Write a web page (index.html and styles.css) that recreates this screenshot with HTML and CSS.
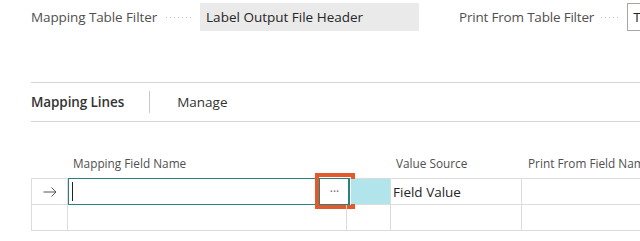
FILE: index.html
```html
<!DOCTYPE html>
<html>
<head>
<meta charset="utf-8">
<link rel="stylesheet" href="styles.css">
</head>
<body>
<div class="page">
  <div class="filters">
    <div class="field field-first">
      <span class="label">Mapping Table Filter</span>
      <span class="leader"></span>
      <span class="value value-filled">Label Output File Header</span>
    </div>
    <div class="field field-second">
      <span class="label">Print From Table Filter</span>
      <span class="leader leader-short"></span>
      <span class="value value-edit">Tr</span>
    </div>
  </div>

  <div class="tabs">
    <span class="tab-title">Mapping Lines</span>
    <span class="tab-sep"></span>
    <span class="tab-action">Manage</span>
  </div>

  <div class="grid">
    <div class="row head">
      <div class="cell c-mark"></div>
      <div class="cell c-name">Mapping Field Name</div>
      <div class="cell c-gap"></div>
      <div class="cell c-src">Value Source</div>
      <div class="cell c-print">Print From Field Name</div>
    </div>
    <div class="row body active">
      <div class="cell c-mark"><svg width="14" height="10" viewBox="0 0 14 10"><path d="M0.5 5H13M8.5 0.5L13 5L8.5 9.5" fill="none" stroke="#555" stroke-width="1"/></svg></div>
      <div class="cell c-name">
        <div class="edit">
          <span class="caret"></span>
          <span class="lookup">···<span class="highlight"></span></span>
        </div>
      </div>
      <div class="cell c-gap"><span class="tint"></span></div>
      <div class="cell c-src">Field Value</div>
      <div class="cell c-print"></div>
    </div>
    <div class="row body">
      <div class="cell c-mark"></div>
      <div class="cell c-name"></div>
      <div class="cell c-gap"></div>
      <div class="cell c-src"></div>
      <div class="cell c-print"></div>
    </div>
  </div>
</div>
</body>
</html>
```
FILE: styles.css
```css
html, body {
  margin: 0;
  padding: 0;
  background: #fff;
  overflow: hidden;
}
body {
  font-family: "Open Sans", "Noto Sans", sans-serif;
  color: #212121;
  width: 640px;
  height: 241px;
}
.page {
  padding-left: 31px;
  width: 640px;
  box-sizing: border-box;
  overflow: hidden;
}
.filters {
  display: flex;
  height: 34px;
  padding-top: 3px;
  box-sizing: border-box;
  white-space: nowrap;
}
.field {
  display: flex;
  align-items: center;
  height: 28px;
  flex-shrink: 0;
}
.field-second {
  margin-left: 40px;
}
.label {
  font-size: 13.5px;
  color: #505050;
  letter-spacing: -0.1px;
}
.field-second .label {
  letter-spacing: -0.2px;
}
.leader {
  width: 27px;
  height: 1px;
  margin: 0 7px 0 9px;
  background-image: repeating-linear-gradient(to right, #c4c4c4 0, #c4c4c4 1px, transparent 1px, transparent 4px);
}
.leader-short {
  width: 20px;
  margin: 0 6px 0 7px;
}
.value {
  font-size: 13.5px;
  height: 28px;
  line-height: 28px;
  box-sizing: border-box;
  flex-shrink: 0;
}
.value-filled {
  background: #eaeaea;
  width: 219px;
  padding-left: 6px;
  color: #262626;
}
.value-edit {
  border: 1px solid #a6a6a6;
  padding-left: 5px;
  line-height: 26px;
  width: 40px;
}
.tabs {
  margin-top: 48px;
  height: 38px;
  border-top: 1px solid #d4d4d4;
  border-bottom: 1px solid #d4d4d4;
  display: flex;
  align-items: center;
  font-size: 13.5px;
}
.tab-title {
  font-weight: 600;
  color: #333;
  letter-spacing: -0.1px;
}
.tab-sep {
  width: 1px;
  height: 22px;
  background: #c8c8c8;
  margin: 0 27px 0 25px;
}
.tab-action {
  color: #333;
}
.grid {
  margin-top: 28px;
  font-size: 13.5px;
}
.row {
  display: flex;
}
.row.head {
  height: 28px;
  font-size: 11.8px;
  color: #505050;
  align-items: center;
  padding-bottom: 3px;
  box-sizing: border-box;
}
.row.body {
  height: 26px;
  border-bottom: 1px solid #dcdcdc;
  box-sizing: border-box;
}
.row.active {
  border-top: 1px solid #dcdcdc;
  height: 27px;
}
.cell {
  box-sizing: border-box;
  display: flex;
  align-items: center;
  white-space: nowrap;
  flex-shrink: 0;
}
.body .cell {
  border-right: 1px solid #dcdcdc;
}
.body .c-mark {
  border-left: 1px solid #dcdcdc;
}
.c-mark {
  width: 37px;
  justify-content: center;
}
.c-name {
  width: 279px;
  padding-left: 5px;
  position: relative;
}
.body .c-name {
  padding-left: 0;
}
.c-gap {
  width: 44px;
  position: relative;
}
.c-src {
  width: 131px;
  padding-left: 5px;
}
.body .c-src {
  padding-left: 2px;
  color: #262626;
}
.c-print {
  width: 130px;
  padding-left: 6px;
}
.body .c-print {
  border-right: none;
}
.edit {
  position: absolute;
  left: 0;
  top: -1px;
  width: 281px;
  height: 27px;
  border: 1.5px solid #2b7f7f;
  box-sizing: border-box;
  background: #fff;
  display: flex;
  align-items: center;
}
.caret {
  width: 1px;
  height: 19px;
  background: #222;
  margin-left: 3px;
}
.lookup {
  margin-left: auto;
  width: 31px;
  height: 27px;
  margin-top: -1px;
  margin-right: -2px;
  border: 1.5px solid #2b7f7f;
  box-sizing: border-box;
  display: flex;
  align-items: center;
  justify-content: center;
  font-size: 12px;
  color: #666;
  position: relative;
}
.highlight {
  position: absolute;
  left: -5.5px;
  top: -5.5px;
  right: -5.5px;
  bottom: -5.5px;
  border: 4px solid #e25a2b;
}
.tint {
  position: absolute;
  left: 4px;
  top: 0;
  right: 0;
  bottom: 0;
  background: #b2e5eb;
}
```
